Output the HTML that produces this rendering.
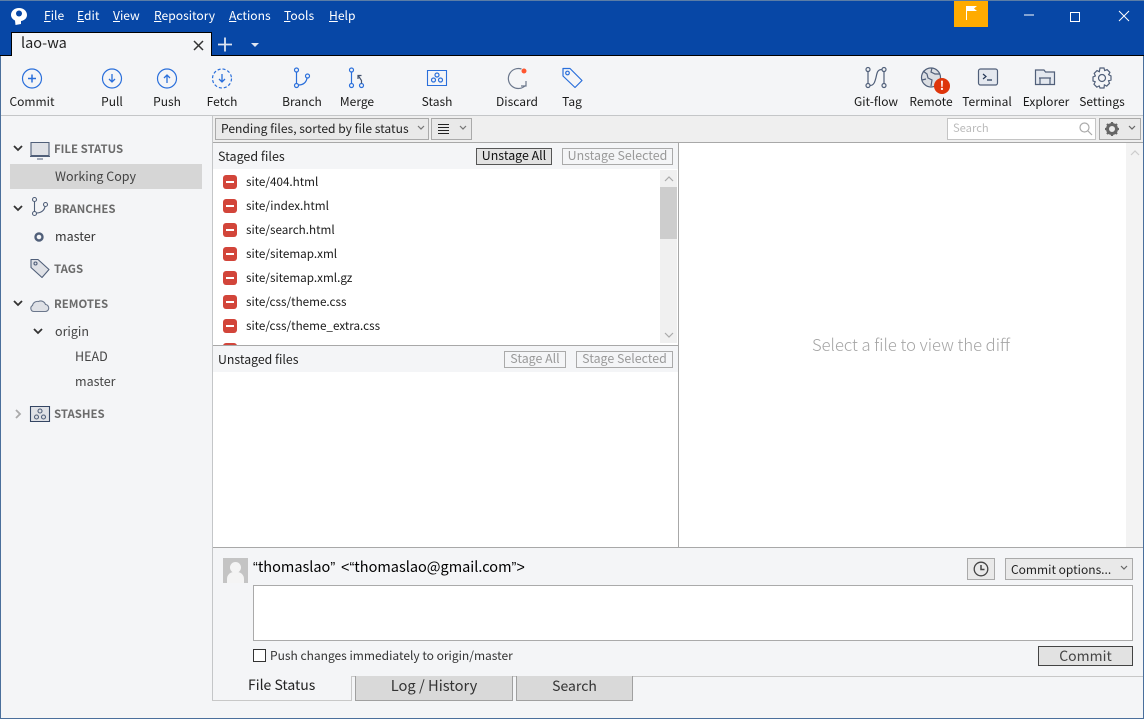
<!DOCTYPE html>
<html><head><meta charset="utf-8"><style>
html,body{margin:0;padding:0;width:1144px;height:719px;overflow:hidden;background:#f4f5f7}
body{position:relative;font-family:"Noto Sans CJK TC","Liberation Sans",sans-serif;font-size:12.5px;color:#1a1a1a}
.t{position:absolute;white-space:nowrap;line-height:18px;height:18px}
.c{transform:translateX(-50%);font-size:12px}
.b{position:absolute;box-sizing:border-box}
svg{position:absolute;overflow:visible}
u{text-decoration:underline}
.m{color:#fff;top:7px;font-size:12.1px;line-height:17px;height:17px}
.s{color:#6b6b6b;font-weight:700;font-size:11.4px}
.f{font-size:11.7px}
.q{font-family:"Liberation Sans",sans-serif}
.btn{position:absolute;box-sizing:border-box;text-align:center;height:17px;line-height:13px;font-size:12.4px;border:1px solid #aaa;color:#999;background:#f4f5f7}
.mi{left:223px;width:14px;height:14px;position:absolute;background:#d2453a;border-radius:3px}
.mi:after{content:"";position:absolute;left:3px;top:6px;width:8px;height:2px;background:#fff}
</style></head><body>
<div class="b" style="left:0;top:0;width:1144px;height:56px;background:#0747a6"></div>
<div class="b" style="left:0;top:0;width:1144px;height:1px;background:#5b7da6"></div>
<div class="b" style="left:0;top:55px;width:1144px;height:1px;background:#000"></div>
<svg style="left:10px;top:7px" width="18" height="19" viewBox="0 0 18 19"><path d="M9 1C4.500 1 1 4 1 8C1 10.500 3 12.500 5 13.500L5.500 18L11 17L11 14C14.500 13.500 17 11 17 8C17 4 13.500 1 9 1z" fill="#fff"/><circle cx="9" cy="6.500" r="3" fill="#0747a6"/></svg>
<div class="t m" style="left:44px"><u>F</u>ile</div>
<div class="t m" style="left:77px"><u>E</u>dit</div>
<div class="t m" style="left:113px"><u>V</u>iew</div>
<div class="t m" style="left:154px"><u>R</u>epository</div>
<div class="t m" style="left:229px"><u>A</u>ctions</div>
<div class="t m" style="left:284px"><u>T</u>ools</div>
<div class="t m" style="left:329px"><u>H</u>elp</div>
<div class="b" style="left:11px;top:32px;width:201px;height:24px;background:#f4f5f7;border:1px solid #000;border-bottom:0"></div>
<div class="t" style="left:21px;top:34px;font-size:14.500px;color:#222">lao-wa</div>
<svg style="left:192px;top:39px" width="12" height="12"><path d="M2 2l9 9M11 2l-9 9" stroke="#333" stroke-width="1.500"/></svg>
<svg style="left:217px;top:36px" width="16" height="16"><path d="M8 1.500v14M1 8.500h14" stroke="#dfe6f2" stroke-width="1.800"/></svg>
<svg style="left:250px;top:42px" width="10" height="6"><path d="M1 1h8L5 5z" fill="#dfe6f2"/></svg>
<div class="b" style="left:954px;top:1px;width:34px;height:26px;background:#ffab00"></div>
<svg style="left:966px;top:5px" width="14" height="16"><path d="M.5 1v14" stroke="#fff"/><path d="M1 1h10l-3 2.500 3 2.500H1z" fill="#fff"/></svg>
<svg style="left:1023px;top:9px" width="110" height="14"><path d="M1 6h10" stroke="#fff" stroke-width="1"/><path d="M47.500 3.500h9v9h-9z" fill="none" stroke="#fff"/><path d="M96 2l10 10M106 2l-10 10" stroke="#fff"/></svg>

<div class="b" style="left:0;top:115px;width:1144px;height:1px;background:#c4c6c8"></div>
<!-- toolbar icons -->
<svg style="left:0;top:66px" width="1144" height="26" fill="none" stroke="#2a6fdb" stroke-width="1.200">
<circle cx="32" cy="12.500" r="9.500"/><path d="M28 12.500h8M32 8.500v8" stroke-width="1.500"/>
<circle cx="112" cy="12.500" r="9.500"/><path d="M112 8v8M109 13l3 3 3-3" stroke-width="1.300"/>
<circle cx="167" cy="12.500" r="9.500"/><path d="M167 17V9M164 12l3-3 3 3" stroke-width="1.300"/>
<circle cx="222" cy="12.500" r="9.500" stroke-dasharray="3 2"/><path d="M222 8v8M219 13l3 3 3-3" stroke-width="1.300"/>
<circle cx="296.500" cy="4" r="2"/><circle cx="296.500" cy="19.500" r="2"/><circle cx="307.500" cy="10" r="2"/><path d="M296.500 6v11.500M298.500 19c5 0 8-3 8.500-7"/>
<circle cx="351.500" cy="4" r="2"/><circle cx="351.500" cy="19.500" r="2"/><path d="M351.500 6v11.500"/><circle cx="361.500" cy="19.500" r="2"/><path d="M361.500 17.500v-3l-3-4.500M358 13v-3.500h3.500" stroke="#44546f"/>
<path d="M427.500 4.500h19v15h-19z" stroke-width="1.100"/><circle cx="437" cy="9" r="2"/><circle cx="433.500" cy="14" r="2"/><circle cx="440.500" cy="14" r="2"/>
<path d="M521.500 3A10 10 0 1 0 525.500 19.500M526 15v5h-5" stroke="#6b778c"/><circle cx="524" cy="5" r="2.500" fill="#ff5630" stroke="none"/>
<path d="M563 2.500h7l12 12-7 7-12-11.500z" stroke-linejoin="round"/><circle cx="567.500" cy="7" r="1.800"/>
<g stroke="#505f79"><circle cx="868" cy="3.500" r="2"/><circle cx="868" cy="19.500" r="2"/><circle cx="884" cy="3.500" r="2"/><circle cx="884" cy="19.500" r="2"/><path d="M868 5.500v12M884 5.500v12M882 3.500c-5 0-5 4-6 8s-2 8-6 8"/></g>
<g stroke="#505f79"><circle cx="931" cy="11.500" r="9.500" fill="#c1c7d0" fill-opacity=".5"/><path d="M923 5l4 3 1 4 4 2-1 6M932 2l-1 4 4 2 5 0M922 14l4-1"/></g>
<g stroke="#505f79"><rect x="978.500" y="3" width="19" height="16" rx="2" fill="#e4e8ef"/><path d="M983 8l3 2.500-3 2.500M987 14h5" stroke="#253858"/></g>
<g stroke="#505f79"><path d="M1035.500 4v14.500h19V6h-9l-1.500-2z" stroke-width="1.200" fill="#e4e8ef"/><path d="M1040 18v-6h10v6M1039 12h12" /></g>
<g stroke="#505f79"><circle cx="1102" cy="12" r="3.500"/><path d="M1100 2h4l.7 2.600 2.400-1 2.800 2.800-1.300 2.300 2.400 1.300v4l-2.500.8 1 2.500-2.800 2.800-2.300-1.200L1104 22h-4l-.8-2.100-2.400 1.200-2.800-2.800 1.200-2.500-2.200-.8v-4l2.400-1.100-1.200-2.500 2.800-2.800 2.300 1.100z"/></g>
</svg>
<div class="b" style="left:934px;top:78px;width:16px;height:16px;border-radius:50%;background:#de350b;color:#fff;text-align:center;font-weight:bold;font-size:12px;line-height:16px">!</div>
<div class="t c" style="left:32px;top:93px">Commit</div>
<div class="t c" style="left:112px;top:93px">Pull</div>
<div class="t c" style="left:167px;top:93px">Push</div>
<div class="t c" style="left:222px;top:93px">Fetch</div>
<div class="t c" style="left:302px;top:93px">Branch</div>
<div class="t c" style="left:357px;top:93px">Merge</div>
<div class="t c" style="left:437px;top:93px">Stash</div>
<div class="t c" style="left:517px;top:93px">Discard</div>
<div class="t c" style="left:572px;top:93px">Tag</div>
<div class="t c" style="left:876px;top:93px">Git-flow</div>
<div class="t c" style="left:931px;top:93px">Remote</div>
<div class="t c" style="left:987px;top:93px">Terminal</div>
<div class="t c" style="left:1046px;top:93px">Explorer</div>
<div class="t c" style="left:1102px;top:93px">Settings</div>

<!-- sidebar -->
<div class="b" style="left:212px;top:116px;width:1px;height:585px;background:#c4c6c8"></div>
<div class="b" style="left:10px;top:164px;width:192px;height:25px;background:#d6d6d6"></div>
<svg style="left:0;top:116px" width="212" height="310" fill="none" stroke="#505f79" stroke-width="1.100">
<path d="M14 30l4 4 4-4M14 90l4 4 4-4M14 185l4 4 4-4M34 213l4 4 4-4" stroke="#333" stroke-width="1.800"/>
<path d="M16 294l4 4-4 4" stroke="#aaa" stroke-width="1.800"/>
<path d="M31 26.500h18v13H31zM30 40.500h20M37 43h6" fill="#dfe1e6"/>
<circle cx="34.500" cy="83.500" r="2"/><circle cx="34.500" cy="97.500" r="2"/><circle cx="45.500" cy="88.500" r="2"/><path d="M34.500 85.500v10M36.500 97c5 0 8-3 8.500-6.500"/>
<circle cx="39" cy="121" r="3.500" stroke="#505f79" stroke-width="2.400"/>
<path d="M31 143.500h7l11 10-7 8-11-10z" fill="#dfe1e6" stroke-linejoin="round"/><circle cx="35.500" cy="147.500" r="1.500"/>
<path d="M34 195.500h11a3.500 3.500 0 0 0 .5-7 5 5 0 0 0-7-3 5 5 0 0 0-6 4 3.200 3.200 0 0 0 1.500 6z" fill="#dfe1e6" stroke="#6b778c"/>
<path d="M30.500 290.500h19v15h-19z" fill="#dfe1e6" stroke="#344563"/><circle cx="40" cy="295" r="2"/><circle cx="36.500" cy="301" r="2"/><circle cx="43.500" cy="301" r="2"/>
</svg>
<div class="t s" style="left:54px;top:140px">FILE STATUS</div>
<div class="t" style="left:55px;top:167px;color:#444">Working Copy</div>
<div class="t s" style="left:54px;top:200px">BRANCHES</div>
<div class="t" style="left:55px;top:227px;color:#333">master</div>
<div class="t s" style="left:54px;top:260px">TAGS</div>
<div class="t s" style="left:54px;top:295px">REMOTES</div>
<div class="t" style="left:55px;top:322px;color:#444">origin</div>
<div class="t" style="left:75px;top:347px;color:#444">HEAD</div>
<div class="t" style="left:75px;top:372px;color:#444">master</div>
<div class="t s" style="left:54px;top:405px">STASHES</div>

<!-- filter bar -->
<div class="b" style="left:213px;top:116px;width:931px;height:27px;background:#efefef;border-bottom:1px solid #a8a8a8"></div>
<div class="b" style="left:215px;top:118px;width:214px;height:22px;background:#e9e9e9;border:1px solid #aaa"></div>
<div class="t" style="left:221px;top:120px;color:#222;font-size:12.1px">Pending files, sorted by file status</div>
<div class="b" style="left:431px;top:118px;width:41px;height:22px;background:#e9e9e9;border:1px solid #aaa"></div>
<svg style="left:417px;top:125px" width="50" height="8" fill="none" stroke="#777" stroke-width="1.200"><path d="M1 1l3 3 3-3M43 1l3 3 3-3"/></svg>
<svg style="left:438px;top:124px" width="12" height="10"><path d="M0 .5h11M0 3.500h11M0 6.500h11M0 9.500h11" stroke="#222"/></svg>
<div class="b" style="left:947px;top:118px;width:149px;height:22px;background:#fff;border:1px solid #c4c4c4"></div>
<div class="t" style="left:953px;top:119px;color:#bbb;font-size:11.200px">Search</div>
<svg style="left:1079px;top:122px" width="14" height="14" fill="none" stroke="#aaa" stroke-width="1.200"><circle cx="5.500" cy="5.500" r="4.500"/><path d="M9 9l4 4"/></svg>
<div class="b" style="left:1099px;top:118px;width:42px;height:22px;background:#e9e9e9;border:1px solid #aaa"></div>
<svg style="left:1104px;top:121px" width="16" height="16"><circle cx="8" cy="8" r="4.500" fill="none" stroke="#666" stroke-width="3"/><path d="M8 1v14M1 8h14M3 3l10 10M13 3L3 13" stroke="#666" stroke-width="2.200" stroke-dasharray="2.500 9 2.500 0"/></svg>
<svg style="left:1128px;top:125px" width="8" height="6" fill="none" stroke="#666" stroke-width="1.200"><path d="M1 1l3 3 3-3"/></svg>

<!-- staged -->
<div class="t" style="left:218px;top:147px;color:#222">Staged files</div>
<div class="btn" style="left:476px;top:148px;width:76px;border-color:#555;background:#e2e2e2;color:#111">Unstage All</div>
<div class="btn" style="left:562px;top:148px;width:111px">Unstage Selected</div>
<div class="b" style="left:213px;top:169px;width:465px;height:176px;background:#fff;overflow:hidden">
<div class="mi" style="left:10px;top:6px"></div><div class="mi" style="left:10px;top:30px"></div><div class="mi" style="left:10px;top:54px"></div><div class="mi" style="left:10px;top:78px"></div><div class="mi" style="left:10px;top:102px"></div><div class="mi" style="left:10px;top:126px"></div><div class="mi" style="left:10px;top:150px"></div><div class="mi" style="left:10px;top:174px"></div>
<div class="t f" style="left:33px;top:4px">site/404.html</div>
<div class="t f" style="left:33px;top:28px">site/index.html</div>
<div class="t f" style="left:33px;top:52px">site/search.html</div>
<div class="t f" style="left:33px;top:76px">site/sitemap.xml</div>
<div class="t f" style="left:33px;top:100px">site/sitemap.xml.gz</div>
<div class="t f" style="left:33px;top:124px">site/css/theme.css</div>
<div class="t f" style="left:33px;top:148px">site/css/theme_extra.css</div>
<div class="b" style="left:447px;top:1px;width:17px;height:173px;background:#f0f0f0"></div>
<div class="b" style="left:447px;top:18px;width:17px;height:52px;background:#cdcdcd"></div>
<svg style="left:451px;top:7px" width="10" height="162" fill="none" stroke="#aaa" stroke-width="1.200"><path d="M1 5l4-4 4 4M1 157l4 4 4-4"/></svg>
</div>
<div class="b" style="left:213px;top:345px;width:465px;height:1px;background:#a8a8a8"></div>
<div class="t" style="left:218px;top:350px;color:#222;font-size:12.300px">Unstaged files</div>
<div class="btn" style="left:504px;top:351px;width:62px">Stage All</div>
<div class="btn" style="left:576px;top:351px;width:97px">Stage Selected</div>
<div class="b" style="left:213px;top:372px;width:465px;height:175px;background:#fff"></div>
<!-- diff -->
<div class="b" style="left:678px;top:143px;width:1px;height:404px;background:#a8a8a8"></div>
<div class="b" style="left:679px;top:143px;width:464px;height:404px;background:#fff"></div>
<div class="b" style="left:1126px;top:143px;width:17px;height:404px;background:#f3f3f3"></div>
<svg style="left:1130px;top:150px" width="10" height="6" fill="none" stroke="#ccc" stroke-width="1.200"><path d="M1 5l4-4 4 4"/></svg>
<div class="t" style="left:812px;top:335px;font-size:16.600px;color:#a5a5a5;font-weight:300">Select a file to view the diff</div>
<!-- commit -->
<div class="b" style="left:213px;top:547px;width:931px;height:1px;background:#a8a8a8"></div>
<div class="b" style="left:223px;top:558px;width:25px;height:25px;background:#c4c4c4;overflow:hidden"><div class="b" style="left:7px;top:4px;width:11px;height:11px;border-radius:50%;background:#f4f4f4"></div><div class="b" style="left:4px;top:14px;width:17px;height:14px;border-radius:7px 7px 0 0;background:#f4f4f4"></div></div>
<div class="t" style="left:253px;top:558px;font-size:14.500px;color:#000"><span class="q">“</span>thomaslao<span class="q">”</span></div>
<div class="t" style="left:341px;top:558px;font-size:14.500px;color:#000"><span class="q">&lt;“</span>thomaslao@gmail.com<span class="q">”&gt;</span></div>
<div class="b" style="left:967px;top:558px;width:28px;height:22px;background:#e9e9e9;border:1px solid #aaa"></div>
<svg style="left:972px;top:560px" width="18" height="18" fill="none" stroke="#444" stroke-width="1.300"><circle cx="9" cy="9" r="6.800"/><path d="M9 5v4.500h3.500" stroke-width="1.500"/></svg>
<div class="b" style="left:1005px;top:558px;width:128px;height:22px;background:#e9e9e9;border:1px solid #aaa"></div>
<div class="t" style="left:1011px;top:561px;color:#222;font-size:12px">Commit options...</div>
<svg style="left:1120px;top:565px" width="8" height="6" fill="none" stroke="#666" stroke-width="1.200"><path d="M1 1l3 3 3-3"/></svg>
<div class="b" style="left:253px;top:585px;width:880px;height:56px;background:#fff;border:1px solid #aaa"></div>
<div class="b" style="left:253px;top:649px;width:13px;height:13px;background:#fff;border:1px solid #333"></div>
<div class="t" style="left:270px;top:647px;color:#333;font-size:12px">Push changes immediately to origin/master</div>
<div class="b" style="left:1038px;top:646px;width:95px;height:20px;background:#e2e2e2;border:1px solid #444;text-align:center;line-height:18px;font-size:14px;color:#444">Commit</div>
<!-- tabs -->
<div class="b" style="left:351px;top:676px;width:793px;height:1px;background:#c8c8c8"></div>
<div class="b" style="left:212px;top:700px;width:140px;height:1px;background:#c8c8c8"></div>
<div class="b" style="left:351px;top:676px;width:1px;height:25px;background:#c8c8c8"></div>
<div class="t" style="left:248px;top:676px;font-size:14px;color:#222">File Status</div>
<div class="b" style="left:355px;top:676px;width:158px;height:25px;background:#d9d9d9;border:1px solid #a0a0a0;border-top:0;text-align:center;line-height:20px;font-size:14.700px;color:#333">Log / History</div>
<div class="b" style="left:516px;top:676px;width:117px;height:25px;background:#d9d9d9;border:1px solid #a0a0a0;border-top:0;text-align:center;line-height:20px;font-size:14px;color:#333">Search</div>
<!-- window border -->
<div class="b" style="left:0;top:56px;width:1px;height:663px;background:#4a6f9c"></div>
<div class="b" style="left:1143px;top:56px;width:1px;height:663px;background:#4a6f9c"></div>
<div class="b" style="left:0;top:718px;width:1144px;height:1px;background:#4a6f9c"></div>
</body></html>
